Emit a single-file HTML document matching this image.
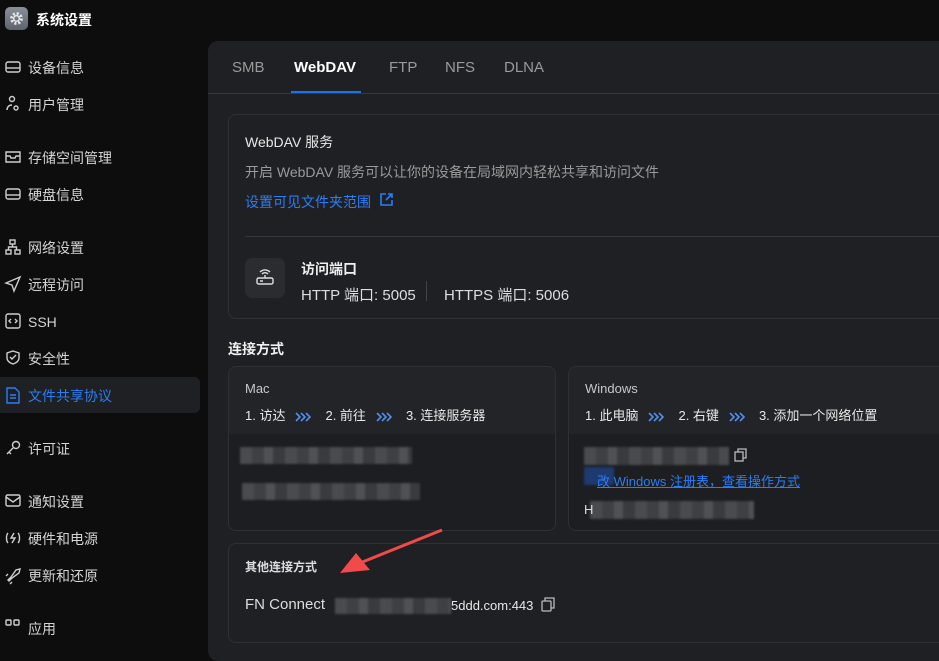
<!DOCTYPE html>
<html><head><meta charset="utf-8"><style>
*{margin:0;padding:0;box-sizing:border-box}
body{width:939px;height:631px;overflow:hidden;background:#0d0d0e;font-family:"Liberation Sans","Noto Sans CJK SC",sans-serif;color:#ddd;position:relative}
.a{position:absolute;white-space:nowrap}
.nav{position:absolute;left:28px;font-size:14px;color:#d4d4d4;line-height:18px}
.panel{position:absolute;left:208px;top:41px;width:760px;height:620px;background:#1f2023;border-radius:10px}
.card{position:absolute;border:1px solid #2f3034;border-radius:8px}
.blur{position:absolute;background:repeating-linear-gradient(90deg,#4a4b4e 0 12px,#3f4043 12px 24px,#505155 24px 33px,#3a3b3e 33px 45px);filter:blur(1px)}
.ch{display:inline-block;vertical-align:middle;margin:0 14px 0 10px}
</style></head><body>
<div class="a" style="left:5px;top:7px;width:23px;height:23px;border-radius:5px;background:linear-gradient(#8a9099,#5c6370)"></div>
<svg class="a" style="left:8px;top:10px" width="17" height="17" viewBox="0 0 24 24"><circle cx="12" cy="12" r="7" fill="none" stroke="#e8e8e8" stroke-width="4" stroke-dasharray="3 2.5"/><circle cx="12" cy="12" r="4" fill="none" stroke="#e8e8e8" stroke-width="2"/></svg>
<div class="a" style="left:36px;top:10px;font-size:14px;font-weight:bold;color:#fff">系统设置</div>

<div class="a" style="left:0;top:377px;width:200px;height:36px;background:#1f2023;border-radius:0 6px 6px 0"></div>
<svg class="a" style="left:0;top:0" width="28" height="631" fill="none" stroke="#cfcfcf" stroke-width="1.4">
<rect x="6" y="62" width="14" height="10" rx="2"/><path d="M6 68h14"/>
<circle cx="12" cy="99" r="2.5"/><path d="M7 110c0-3 2-5 5-5"/><circle cx="16" cy="108" r="2"/>
<path d="M6 152h14v10H6zM6 156h4l1 2h4l1-2h4"/>
<rect x="6" y="189" width="14" height="10" rx="2"/><path d="M6 195h14"/>
<rect x="10" y="240" width="5" height="4"/><rect x="6" y="250" width="5" height="4"/><rect x="15" y="250" width="5" height="4"/><path d="M12.5 244v3M8.5 250v-3h8v3"/>
<path d="M20 277l-14 6 6 2 2 6z"/>
<rect x="6" y="314" width="14" height="14" rx="2"/><path d="M11 319l-2 2 2 2M15 319l2 2-2 2"/>
<path d="M13 351l6 2v5c0 3-3 5-6 6-3-1-6-3-6-6v-5z"/><path d="M10 357l2 2 4-4"/>
<path d="M7 388h8l4 4v11H7z M10 395h6M10 398h6" stroke="#2a7ef5"/>
<circle cx="16" cy="445" r="3.5"/><path d="M13 448l-6 6M9 452l2 2"/>
<rect x="6" y="495" width="14" height="11" rx="1.5"/><path d="M6 497l7 5 7-5"/>
<path d="M8 533c-2 2-2 8 0 10M18 533c2 2 2 8 0 10M14 533l-3 5h4l-3 5"/>
<path d="M8 580l3-3 5-7 4-1-1 4-7 5-3 3zM8 574l-2 2M12 582l-2 2"/>
<rect x="6" y="620" width="5" height="5" rx="1"/><rect x="14" y="620" width="5" height="5" rx="1"/>
</svg>
<div class="nav" style="top:59px">设备信息</div>
<div class="nav" style="top:96px">用户管理</div>
<div class="nav" style="top:149px">存储空间管理</div>
<div class="nav" style="top:186px">硬盘信息</div>
<div class="nav" style="top:239px">网络设置</div>
<div class="nav" style="top:276px">远程访问</div>
<div class="nav" style="top:313px">SSH</div>
<div class="nav" style="top:350px">安全性</div>
<div class="nav" style="top:387px;color:#2a7ef5">文件共享协议</div>
<div class="nav" style="top:440px">许可证</div>
<div class="nav" style="top:493px">通知设置</div>
<div class="nav" style="top:530px">硬件和电源</div>
<div class="nav" style="top:567px">更新和还原</div>
<div class="nav" style="top:620px">应用</div>

<div class="panel"></div>
<div class="a" style="left:208px;top:93px;width:731px;height:1px;background:#38393d"></div>
<div class="a" style="left:232px;top:59px;font-size:15px;color:#9a9a9a">SMB</div>
<div class="a" style="left:294px;top:59px;font-size:15px;color:#fff;font-weight:bold">WebDAV</div>
<div class="a" style="left:291px;top:91px;width:70px;height:2px;background:#1a73e8"></div>
<div class="a" style="left:389px;top:59px;font-size:15px;color:#9a9a9a">FTP</div>
<div class="a" style="left:445px;top:59px;font-size:15px;color:#9a9a9a">NFS</div>
<div class="a" style="left:504px;top:59px;font-size:15px;color:#9a9a9a">DLNA</div>

<div class="card" style="left:228px;top:114px;width:740px;height:205px"></div>
<div class="a" style="left:245px;top:132px;font-size:14px;color:#e8e8e8">WebDAV 服务</div>
<div class="a" style="left:245px;top:162px;font-size:14px;color:#9a9a9a">开启 WebDAV 服务可以让你的设备在局域网内轻松共享和访问文件</div>
<div class="a" style="left:245px;top:192px;font-size:14px;color:#2a7ef5">设置可见文件夹范围</div>
<svg class="a" style="left:379px;top:192px" width="15" height="15" fill="none" stroke="#2a7ef5" stroke-width="1.6"><path d="M7 2H2v11h11V8M9 2h4v4M13 2L7 8"/></svg>
<div class="a" style="left:245px;top:236px;width:700px;height:1px;background:#36373b"></div>
<div class="a" style="left:245px;top:258px;width:40px;height:40px;border-radius:7px;background:#2b2c30"></div>
<svg class="a" style="left:255px;top:267px" width="20" height="20" fill="none" stroke="#ddd" stroke-width="1.4"><rect x="2" y="11" width="16" height="6" rx="1.5"/><path d="M5 14h3M7 7a4 4 0 0 1 6 0M5 5a7 7 0 0 1 10 0M10 8v3"/></svg>
<div class="a" style="left:301px;top:259px;font-size:14px;font-weight:bold;color:#f0f0f0">访问端口</div>
<div class="a" style="left:301px;top:284px;font-size:15px;color:#ddd">HTTP 端口: 5005</div>
<div class="a" style="left:426px;top:281px;width:1px;height:20px;background:#444"></div>
<div class="a" style="left:444px;top:284px;font-size:15px;color:#ddd">HTTPS 端口: 5006</div>

<div class="a" style="left:228px;top:339px;font-size:14px;font-weight:bold;color:#f0f0f0">连接方式</div>

<div class="card" style="left:228px;top:366px;width:328px;height:165px;background:#1d1e21;overflow:hidden"><div style="height:67px;background:#232427"></div></div>
<div class="a" style="left:245px;top:381px;font-size:13px;color:#c8c8c8">Mac</div>
<div class="a" style="left:245px;top:405px;font-size:13px;color:#e8e8e8">1. 访达<svg class="ch" width="16" height="10" fill="none" stroke="#4f8ff0" stroke-width="1.6"><path d="M1 1l4 4-4 4M6 1l4 4-4 4M11 1l4 4-4 4"/></svg>2. 前往<svg class="ch" width="16" height="10" fill="none" stroke="#4f8ff0" stroke-width="1.6"><path d="M1 1l4 4-4 4M6 1l4 4-4 4M11 1l4 4-4 4"/></svg>3. 连接服务器</div>
<div class="blur" style="left:240px;top:447px;width:172px;height:17px"></div>
<div class="blur" style="left:242px;top:483px;width:178px;height:17px"></div>

<div class="card" style="left:568px;top:366px;width:400px;height:165px;background:#1d1e21;overflow:hidden"><div style="height:67px;background:#232427"></div></div>
<div class="a" style="left:585px;top:381px;font-size:13px;color:#c8c8c8">Windows</div>
<div class="a" style="left:585px;top:405px;font-size:13px;color:#e8e8e8">1. 此电脑<svg class="ch" width="16" height="10" fill="none" stroke="#4f8ff0" stroke-width="1.6"><path d="M1 1l4 4-4 4M6 1l4 4-4 4M11 1l4 4-4 4"/></svg>2. 右键<svg class="ch" width="16" height="10" fill="none" stroke="#4f8ff0" stroke-width="1.6"><path d="M1 1l4 4-4 4M6 1l4 4-4 4M11 1l4 4-4 4"/></svg>3. 添加一个网络位置</div>
<div class="blur" style="left:584px;top:447px;width:145px;height:18px"></div>
<svg class="a" style="left:734px;top:448px" width="14" height="14" fill="none" stroke="#bbb" stroke-width="1.3"><rect x="1" y="4" width="8" height="9"/><path d="M4 4V1h8v9H9"/></svg>
<div class="a" style="left:584px;top:467px;width:30px;height:18px;background:#1f3a6e;filter:blur(1px)"></div>
<div class="a" style="left:597px;top:471px;font-size:13px;color:#2a7ef5;text-decoration:underline">改 Windows 注册表，查看操作方式</div>
<div class="blur" style="left:590px;top:501px;width:164px;height:18px"></div>
<div class="a" style="left:584px;top:502px;font-size:13px;color:#ddd">H</div>

<div class="card" style="left:228px;top:543px;width:740px;height:100px"></div>
<div class="a" style="left:245px;top:558px;font-size:12px;font-weight:bold;color:#ddd">其他连接方式</div>
<div class="a" style="left:245px;top:596px;font-size:15px;color:#ddd">FN Connect</div>
<div class="blur" style="left:335px;top:598px;width:116px;height:16px"></div>
<div class="a" style="left:451px;top:598px;font-size:13px;color:#e8e8e8">5ddd.com:443</div>
<svg class="a" style="left:541px;top:597px" width="15" height="15" fill="none" stroke="#bbb" stroke-width="1.3"><rect x="1" y="4" width="9" height="10" rx="1"/><path d="M4 4V1h9v10h-3"/></svg>

<svg class="a" style="left:330px;top:525px" width="120" height="55"><path d="M112 5L30 38" stroke="#f04a4a" stroke-width="3"/><path d="M10 48L26 28L40 45Z" fill="#f04a4a"/></svg>
</body></html>
